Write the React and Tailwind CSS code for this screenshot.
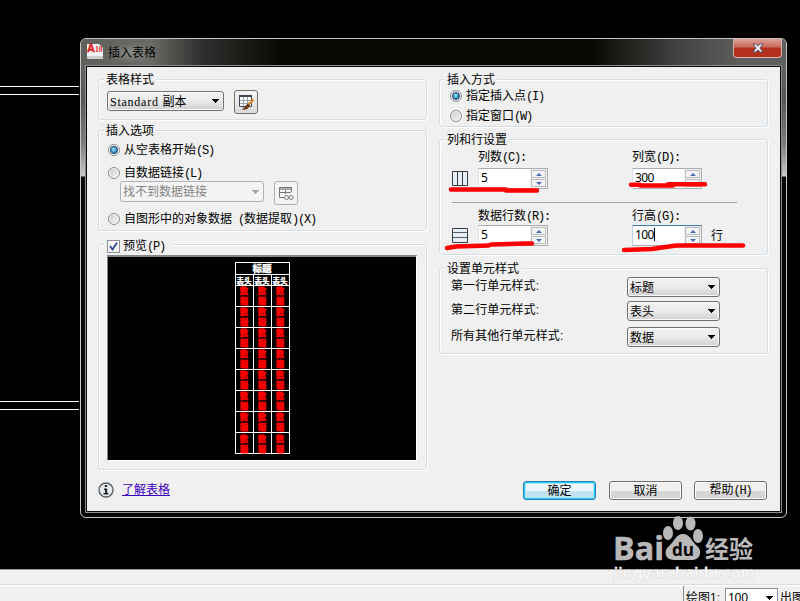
const FONT = "font-['Liberation_Sans','Noto_Sans_CJK_SC',sans-serif]";

// half-width latin text, 6px per character
function Lat({ children }) {
  return (
    <span className="font-['Liberation_Mono',monospace] text-[12px] tracking-[-1.2px] whitespace-pre">
      {children}
    </span>
  );
}

function Group({ title, className, children }) {
  return (
    <fieldset
      className={`ml-0 min-w-0 rounded-[3px] border border-[#d3dfe8] shadow-[inset_1px_1px_0_#fff,1px_1px_0_#fff] ${className}`}
    >
      <legend className="ml-[5px] h-[13px] bg-[#f0f0f0] px-[2px] leading-[15px]">{title}</legend>
      {children}
    </fieldset>
  );
}

function Radio({ checked, children, className = "" }) {
  return (
    <div className={`flex h-[14px] items-center gap-[4px] leading-[14px] whitespace-nowrap ${className}`}>
      <span className="flex size-[12px] shrink-0 items-center justify-center rounded-full border border-[#8a8f94] bg-linear-to-br from-[#c9ccd0] to-[#f6f6f6] shadow-[inset_0_0_0_1px_#f8f8f8]">
        {checked && (
          <span className="size-[8px] rounded-full border border-[#1d3f5e] bg-radial-[at_40%_35%] from-[#8ee4ff] to-[#0b5f98]" />
        )}
      </span>
      <span className="pt-px">{children}</span>
    </div>
  );
}

function Arrow({ className = "text-black" }) {
  return (
    <svg width="8" height="4" viewBox="0 0 8 4" className={className} shapeRendering="crispEdges">
      <path d="M0 0H8L4 4Z" fill="currentColor" />
    </svg>
  );
}

function Select({ className, disabled, children }) {
  return (
    <div
      className={`flex items-center justify-between rounded-[3px] border pr-[4px] pl-[2px] leading-[16px] ${
        disabled
          ? "border-[#adb2b5] bg-[#f4f4f4] text-[#838383]"
          : "border-[#707070] bg-linear-to-b from-[#f2f2f2] from-0% via-[#ebebeb] via-50% to-[#cfcfcf] shadow-[inset_0_0_0_1px_#fafafa]"
      } ${className}`}
    >
      <span className="pt-px">{children}</span>
      <Arrow className={disabled ? "text-[#a5a5a5]" : "text-black"} />
    </div>
  );
}

function Spinner({ value, active }) {
  return (
    <div
      className={`flex h-[21px] w-[70px] border bg-white ${
        active ? "border-[#abadb3] border-t-[#3d7bad] border-l-[#b5cfe7]" : "border-[#abadb3] border-l-[#e2e3ea]"
      }`}
    >
      <div className="flex h-[17px] flex-1 items-center pl-[2px] font-['Noto_Sans',sans-serif] text-[12px] tracking-[-0.6px]">
        {value}
        {active && <span className="h-[13px] w-px bg-black" />}
      </div>
      <div className="flex w-[17px] flex-col gap-px bg-[#f0f0f0] p-px">
        <span className="flex flex-1 items-center justify-center border border-[#b9bcc2] bg-[#f3f3f3]">
          <svg width="6" height="3" viewBox="0 0 6 3">
            <path d="M0 3L3 0L6 3Z" fill="#4a68b8" />
          </svg>
        </span>
        <span className="flex flex-1 items-center justify-center border border-[#b9bcc2] bg-[#f3f3f3]">
          <svg width="6" height="3" viewBox="0 0 6 3">
            <path d="M0 0L3 3L6 0Z" fill="#4a68b8" />
          </svg>
        </span>
      </div>
    </div>
  );
}

function Button({ primary, className = "", children }) {
  return (
    <button
      className={`h-[19px] w-[73px] rounded-[3px] border leading-[16px] ${
        primary
          ? "border-[#2c7fb0] bg-linear-to-b from-[#eef7fc] from-50% to-[#c3e2f3] to-50% shadow-[inset_0_0_0_1px_#22cbfa,inset_0_0_0_2px_#a6e6fb]"
          : "border-[#707070] bg-linear-to-b from-[#f0f0f0] from-50% to-[#d6d6d6] to-50% shadow-[inset_0_0_0_1px_#fafafa]"
      } ${className}`}
    >
      {children}
    </button>
  );
}

function TitleBar() {
  return (
    <div className="-mx-[4px] flex h-[26px] justify-between rounded-t-[5px] bg-[linear-gradient(90deg,#5f5f5c_0px,#6a6a67_70px,#30312e_120px,#070905_200px,#070905_510px,#444542_600px,#5e5e5c_660px,#5e5e5c_100%)] pr-[4px] pl-[4px]">
      <div className="flex items-start">
        <svg width="17" height="17" viewBox="0 0 17 17" className="mt-[4px] ml-[2px]">
          <path d="M0 1H12L16 5V16H0Z" fill="#f1f1f1" />
          <path d="M0 13H16V16H0Z" fill="#cfcfcf" />
          <text x="0" y="9" fontSize="11" fontWeight="bold" fill="#e01b24" stroke="#e01b24" strokeWidth="0.400" fontFamily="Liberation Sans">A</text>
          <text x="8" y="9" fontSize="7.500" fontWeight="bold" fill="#e01b24" fontFamily="Liberation Serif">10</text>
        </svg>
        <span className="mt-[4px] ml-[2px] bg-radial from-[#9a9a96]/70 to-transparent to-70% px-[2px] text-[12px] leading-[20px]">
          插入表格
        </span>
      </div>
      <div className="flex h-[19px] w-[49px] items-center justify-center rounded-b-[4px] border border-t-0 border-[#d8b5ae] bg-linear-to-b from-[#dda196] from-0% via-[#c8685a] via-45% to-[#b5301c] to-50%">
        <svg width="12" height="10" viewBox="0 0 12 10">
          <path d="M1 1H4L6 3.200L8 1H11L7.800 5L11 9H8L6 6.800L4 9H1L4.200 5Z" fill="#fff" stroke="#4d5566" strokeWidth="1" />
        </svg>
      </div>
    </div>
  );
}

function Preview() {
  return (
    <div className="ml-[8px] mt-[4px] flex h-[206px] w-[310px] justify-center border border-t-[2px] border-[#828790] border-r-white border-b-white bg-black pt-[5px] font-['Noto_Sans_CJK_SC',sans-serif] font-black">
      <div className="h-[192px] w-[55px] border border-white">
        <div className="flex h-[12px] items-center justify-center border-b border-white text-[9.5px] leading-[11px] text-white [-webkit-text-stroke:0.3px_#fff]">
          标题
        </div>
        <div className="flex h-[11px] border-b border-white">
          {[0, 1, 2].map((c) => (
            <div
              key={c}
              className="flex w-[18px] items-center justify-center border-r border-white text-[7.5px] leading-[9px] text-white [-webkit-text-stroke:0.2px_#fff] last:w-[17px] last:border-r-0"
            >
              表头
            </div>
          ))}
        </div>
        {[0, 1, 2, 3, 4, 5, 6, 7].map((r) => (
          <div key={r} className="flex h-[21px] border-b border-white last:border-b-0">
            {[0, 1, 2].map((c) => (
              <div
                key={c}
                className="flex w-[18px] flex-col items-center justify-center border-r border-white text-[8px] leading-[10px] text-[#ff0000] [-webkit-text-stroke:0.6px_#ff0000] last:w-[17px] last:border-r-0"
              >
                <span>数</span>
                <span>据</span>
              </div>
            ))}
          </div>
        ))}
      </div>
    </div>
  );
}

function LeftColumn() {
  return (
    <div className="flex w-[329px] flex-col">
      <Group title="表格样式" className="h-[47px]">
        <div className="mt-[4px] ml-[8px] flex gap-[10px]">
          <Select className="mt-px h-[20px] w-[117px]">
            <span className="font-['Liberation_Serif',serif] tracking-[0.75px] whitespace-pre">Standard </span>副本
          </Select>
          <div className="flex size-[24px] items-center justify-center rounded-[3px] border border-[#707070] bg-linear-to-b from-[#f5f5f5] to-[#dadada]">
            <svg width="17" height="17" viewBox="0 0 17 17">
              <path d="M1.500 1.500H13.500V12.500H1.500Z" fill="#fff" stroke="#3c4654" />
              <path d="M1 1H14V3H1Z" fill="#3c4654" />
              <path d="M2 6.500H13M2 9.500H13M5.500 3V12M9.500 3V12" stroke="#9aa5b0" />
              <path d="M15.500 5.500L10.500 10.500" stroke="#d88a2c" strokeWidth="2.500" />
              <path d="M10 9.500L12 11.500C11 15 7 16.500 3.500 15.500C6.500 14.500 7 11 10 9.500Z" fill="#713d20" />
            </svg>
          </div>
        </div>
      </Group>

      <Group title="插入选项" className="mt-[4px] h-[107px]">
        <Radio checked className="mt-[6px] ml-[9px]">
          从空表格开始<Lat>(S)</Lat>
        </Radio>
        <Radio className="mt-[9px] ml-[9px]">
          自数据链接<Lat>(L)</Lat>
        </Radio>
        <div className="mt-[1px] ml-[21px] flex gap-[10px]">
          <Select disabled className="h-[21px] w-[144px]">
            找不到数据链接
          </Select>
          <div className="flex size-[24px] items-center justify-center rounded-[3px] border border-[#adb2b5] bg-[#f4f4f4]">
            <svg width="16" height="15" viewBox="0 0 16 15" fill="none" stroke="#777">
              <path d="M1.500 1.500H13.500V6M1.500 1.500V11.500H6M1 6.500H13M7.500 1V8" />
              <path d="M2 2H13V4H2Z" fill="#aaa" stroke="none" />
              <circle cx="8.500" cy="11.500" r="2" />
              <circle cx="13.200" cy="11.500" r="2" />
            </svg>
          </div>
        </div>
        <Radio className="mt-[7px] ml-[9px]">
          自图形中的对象数据<Lat> (</Lat>数据提取<Lat>)(X)</Lat>
        </Radio>
      </Group>

      <Group
        title={
          <span className="flex items-center gap-[3px] pl-px">
            <span className="flex size-[13px] shrink-0 items-center justify-center border border-[#8e8f8f] bg-[#f4f4f4]">
              <svg width="9" height="9" viewBox="0 0 9 9">
                <path d="M1 4L3.500 7.500L8 0.800" fill="none" stroke="#31488f" strokeWidth="1.800" />
              </svg>
            </span>
            <span className="pt-px pr-[6px]">
              预览<Lat>(P)</Lat>
            </span>
          </span>
        }
        className="mt-[7px] h-[232px]"
      >
        <Preview />
      </Group>
    </div>
  );
}

function RightColumn() {
  const styles = [
    ["第一行单元样式:", "标题", "mt-[2px]"],
    ["第二行单元样式:", "表头", "mt-[4px]"],
    ["所有其他行单元样式:", "数据", "mt-[6px]"],
  ];
  return (
    <div className="flex w-[329px] flex-col">
      <Group title="插入方式" className="h-[54px]">
        <Radio checked className="mt-[3px] ml-[10px]">
          指定插入点<Lat>(I)</Lat>
        </Radio>
        <Radio className="mt-[6px] ml-[10px]">
          指定窗口<Lat>(W)</Lat>
        </Radio>
      </Group>

      <Group title="列和行设置" className="mt-[6px] h-[122px]">
        <div className="flex h-[56px] pt-[3px]">
          <svg width="16" height="15" viewBox="0 0 16 15" className="mt-[22px] ml-[12px]">
            <path d="M0.500 0.500H15.500V14.500H0.500Z" fill="#e9eef2" stroke="#333c4a" />
            <path d="M5.500 1V14M10.500 1V14" stroke="#333c4a" />
          </svg>
          <div className="ml-[10px] w-[154px]">
            <div className="h-[19px] leading-[16px]">
              列数<Lat>(C):</Lat>
            </div>
            <Spinner value="5" />
          </div>
          <div>
            <div className="h-[19px] leading-[16px]">
              列宽<Lat>(D):</Lat>
            </div>
            <Spinner value="300" />
          </div>
        </div>
        <div className="ml-[12px] w-[285px] border-t border-[#a0a0a0]" />
        <div className="flex pt-[5px]">
          <svg width="16" height="15" viewBox="0 0 16 15" className="mt-[20px] ml-[12px]">
            <path d="M0.500 0.500H15.500V14.500H0.500Z" fill="#e9eef2" stroke="#333c4a" />
            <path d="M1 4.500H15M1 9.500H15" stroke="#555e6a" />
          </svg>
          <div className="ml-[10px] w-[154px]">
            <div className="h-[17px] leading-[17px]">
              数据行数<Lat>(R):</Lat>
            </div>
            <Spinner value="5" />
          </div>
          <div>
            <div className="h-[17px] leading-[17px]">
              行高<Lat>(G):</Lat>
            </div>
            <Spinner value="100" active />
          </div>
          <span className="mt-[20px] ml-[9px] leading-[17px]">行</span>
        </div>
      </Group>

      <Group title="设置单元样式" className="mt-[7px] h-[92px]">
        {styles.map(([label, value, gap]) => (
          <div key={label} className={`ml-[11px] flex ${gap}`}>
            <span className="w-[176px] leading-[18px] tracking-[0.1px]">{label}</span>
            <Select className="h-[20px] w-[93px]">{value}</Select>
          </div>
        ))}
      </Group>
    </div>
  );
}

function Dialog() {
  return (
    <div className="absolute top-[38px] left-[80px] flex h-[480px] w-[707px] flex-col rounded-[6px] border border-[#c4c4c4] bg-[linear-gradient(180deg,#6a6a67_0px,#575755_60px,#7d7d7b_105px,#c8c8c8_137px,#070905_138px,#070905_100%)] px-[4px] pb-[4px]">
      <TitleBar />
      <div className="flex flex-1 flex-col border border-[#8d8d8d] bg-[#f0f0f0] shadow-[inset_0_0_0_1px_#0a0a0a]">
        <div className="mt-[7px] ml-[12px] flex gap-[12px]">
          <LeftColumn />
          <RightColumn />
        </div>
        <div className="mt-[11px] ml-[12px] flex">
          <svg width="16" height="16" viewBox="0 0 16 16" className="mt-px">
            <circle cx="8" cy="8" r="7" fill="#e6eaec" stroke="#555c64" strokeWidth="1.300" />
            <path d="M6.800 3H9.200V5H6.800ZM6 6.500H9.200V11H10.500V12.500H5.500V11H7V8H6Z" fill="#222831" />
          </svg>
          <a className="ml-[8px] leading-[18px] text-[#3d00c0] underline">了解表格</a>
          <div className="ml-[353px] flex">
            <Button primary>确定</Button>
            <Button className="ml-[13px]">取消</Button>
            <Button className="ml-[12px]">
              帮助<Lat>(H)</Lat>
            </Button>
          </div>
        </div>
      </div>
    </div>
  );
}

// marker lines under the four numeric fields
function Strokes() {
  return (
    <svg className="absolute inset-0" width="800" height="601" fill="none" stroke="#ff0000" strokeWidth="4.500" strokeLinecap="round" strokeLinejoin="round">
      <path d="M451 189.500H506M506 190.500H537" />
      <path d="M631 184.800H640M640 185.500H673M668 184.300H705" />
      <path d="M447 248L456 246.500L489 245.500M491 244.500L526 243.500H532" />
      <path d="M624 250L652 249L662 247.500L676 245.500H743" />
    </svg>
  );
}

function Watermark() {
  return (
    <svg className="absolute top-[510px] left-[605px]" width="165" height="75" fill="#b9b9b9">
      <text x="8" y="50" fontFamily="Open Sans" fontWeight="bold" fontSize="33" textLength="51" lengthAdjust="spacingAndGlyphs" stroke="#b9b9b9" strokeWidth="0.600">Bai</text>
      <ellipse cx="63" cy="23" rx="5" ry="7" />
      <ellipse cx="73" cy="13" rx="5" ry="7" />
      <ellipse cx="85.500" cy="13.500" rx="5" ry="7" />
      <ellipse cx="93" cy="26" rx="5" ry="7" />
      <path d="M78 24C85 24 87 32 92 36C98 41 95 50 87 50H69C60 50 58 41 64 36C69 32 71 24 78 24Z" />
      <text x="67" y="46" fontFamily="Open Sans" fontWeight="bold" fontSize="18" fill="#000" textLength="22" lengthAdjust="spacingAndGlyphs">du</text>
      <text x="100" y="48" fontFamily="Noto Sans CJK SC" fontWeight="bold" fontSize="24">经验</text>
      <text x="9" y="68" fontFamily="Noto Sans" fontSize="15" fill="#fff" stroke="#d2d2d2" strokeWidth="1" paintOrder="stroke" textLength="141">jingyan.baidu.com</text>
    </svg>
  );
}

export default function App() {
  return (
    <div className={`relative flex h-[601px] w-[800px] flex-col overflow-hidden bg-black text-[12px] text-black ${FONT}`}>
      <div className="flex h-[569px] shrink-0 flex-col">
        <div className="mt-[86px] h-[9px] w-[79px] border-y border-white" />
        <div className="mt-[306px] h-[9px] w-[79px] border-y border-white" />
      </div>
      <div className="h-[16px] shrink-0 border-t border-b border-[#9a9a9a] border-b-[#dcdcdc] bg-[#f0f0f0]" />
      <div className="flex h-[16px] shrink-0 border-t border-white bg-[#f0f0f0]">
        <div className="w-[684px] shrink-0 border-r border-[#8c8c8c]" />
        <div className="mt-[2px] flex leading-[20px] whitespace-nowrap">
          <span className="w-[41px] pl-[2px]">绘图1:</span>
          <span className="flex h-[20px] w-[53px] items-center justify-between border border-[#8c8f96] bg-white pr-[4px] pl-[2px] leading-[18px] font-['Noto_Sans',sans-serif] tracking-[-0.3px]">
            100
            <Arrow />
          </span>
          <span className="pl-[2px]">出图</span>
        </div>
      </div>
      <Dialog />
      <Strokes />
      <Watermark />
    </div>
  );
}
